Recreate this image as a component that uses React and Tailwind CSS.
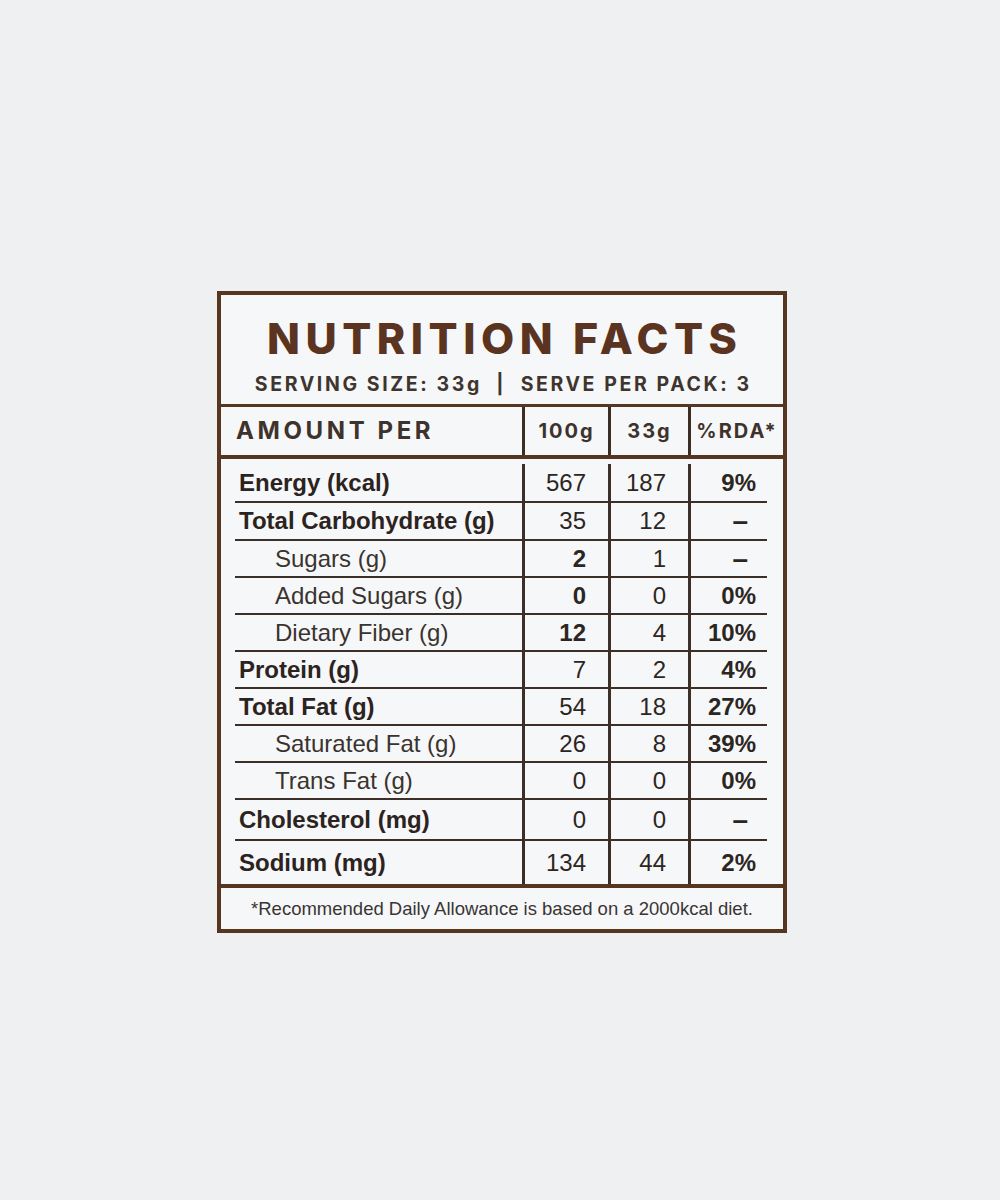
import React from 'react';

const rows = [
  { label: 'Energy (kcal)', main: true, a: '567', b: '187', rda: '9%', h: 'h-[44px] pt-[5px]' },
  { label: 'Total Carbohydrate (g)', main: true, a: '35', b: '12', rda: '–', h: 'h-[38px]' },
  { label: 'Sugars (g)', a: '2', b: '1', rda: '–', h: 'h-[37px]', boldA: true },
  { label: 'Added Sugars (g)', a: '0', b: '0', rda: '0%', h: 'h-[37px]', boldA: true },
  { label: 'Dietary Fiber (g)', a: '12', b: '4', rda: '10%', h: 'h-[37px]', boldA: true },
  { label: 'Protein (g)', main: true, a: '7', b: '2', rda: '4%', h: 'h-[37px]' },
  { label: 'Total Fat (g)', main: true, a: '54', b: '18', rda: '27%', h: 'h-[37px]' },
  { label: 'Saturated Fat (g)', a: '26', b: '8', rda: '39%', h: 'h-[37px]' },
  { label: 'Trans Fat (g)', a: '0', b: '0', rda: '0%', h: 'h-[37px]' },
  { label: 'Cholesterol (mg)', main: true, a: '0', b: '0', rda: '–', h: 'h-[41px]' },
  { label: 'Sodium (mg)', main: true, a: '134', b: '44', rda: '2%', h: 'h-[43px]', last: true },
];

const Row = ({ row }) => {
  const line = row.last ? '' : 'border-b-2 border-[#3b2f27]';
  return (
    <div className={`grid grid-cols-[301px_86px_80px_1fr] ${row.h}`}>
      <div className={`ml-[14px] flex items-center ${line} ${row.main ? 'pl-[4px] font-bold text-[#2c231e]' : 'pl-[40px] text-[#3a332e]'}`}>
        {row.label}
      </div>
      <div className={`flex items-center justify-end pr-[22px] border-l-[3px] border-[#3b2d24] ${line} ${row.boldA ? 'font-bold' : ''}`}>
        {row.a}
      </div>
      <div className={`flex items-center justify-end pr-[22px] border-l-[3px] border-[#3b2d24] ${line}`}>
        {row.b}
      </div>
      <div className={`mr-[16px] flex items-center justify-end pr-[11px] border-l-[3px] border-[#3b2d24] font-bold ${line}`}>
        {row.rda === '–' ? <span className="mr-[8px] text-[28px]">–</span> : row.rda}
      </div>
    </div>
  );
};

export default function App() {
  return (
    <div className="min-h-[1200px] w-full bg-[#eef0f2] pt-[291px]">
      <div className="ml-[217px] w-[570px] border-4 border-[#573621] bg-[#f6f7f9]">
        {/* heading */}
        <div className="flex h-[112px] flex-col items-center border-b-[3px] border-[#573621] pt-[22px] font-['Inter',sans-serif]">
          <div className="-mr-[5.5px] text-[43px] font-extrabold leading-none tracking-[5.5px] text-[#5a3420]">
            NUTRITION FACTS
          </div>
          <div className="mt-[15px] -mr-[2.6px] text-[19.5px] font-bold leading-none tracking-[2.6px] text-[#3f352f]">
            SERVING SIZE: 33g&nbsp;&nbsp;|&nbsp;&nbsp;SERVE PER PACK: 3
          </div>
        </div>

        {/* column titles */}
        <div className="grid h-[52px] grid-cols-[301px_86px_80px_1fr] border-b-4 border-[#573621] font-['Inter',sans-serif] font-bold text-[#3e332c]">
          <div className="flex items-center pl-[15px] text-[24px] tracking-[3.6px]">AMOUNT PER</div>
          <div className="flex items-center justify-center border-l-[3px] border-[#3b2d24] text-[20px] tracking-[2px]">100g</div>
          <div className="flex items-center justify-center border-l-[3px] border-[#3b2d24] text-[20px] tracking-[2px]">33g</div>
          <div className="flex items-center justify-center border-l-[3px] border-[#3b2d24] text-[20px] tracking-[2px]">%RDA*</div>
        </div>

        {/* values */}
        <div className="border-b-4 border-[#573621] font-['Liberation_Sans',Arial,sans-serif] text-[24px] leading-none text-[#2c2622]">
          {rows.map((row) => (
            <Row key={row.label} row={row} />
          ))}
        </div>

        {/* footnote */}
        <div className="flex h-[41px] items-center justify-center font-['Liberation_Sans',Arial,sans-serif] text-[18.5px] text-[#3a3533]">
          *Recommended Daily Allowance is based on a 2000kcal diet.
        </div>
      </div>
    </div>
  );
}
